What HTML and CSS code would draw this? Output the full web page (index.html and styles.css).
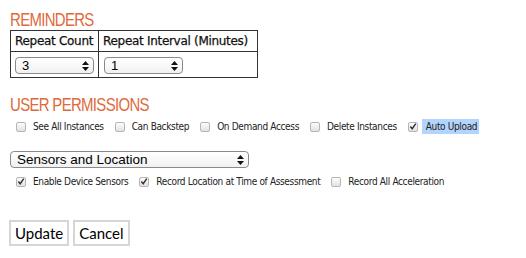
FILE: index.html
```html
<!DOCTYPE html>
<html>
<head>
<meta charset="utf-8">
<link rel="stylesheet" href="styles.css">
</head>
<body>
<h2 class="heading"><span class="heading-text">REMINDERS</span></h2>
<table class="reminders">
  <colgroup>
    <col class="col-count">
    <col class="col-interval">
  </colgroup>
  <tr>
    <th>Repeat Count</th>
    <th>Repeat Interval (Minutes)</th>
  </tr>
  <tr>
    <td class="cell-count">
      <span class="select-wrap select-small">
        <select class="select"><option>3</option></select>
        <svg class="arrows" width="7" height="10" viewBox="0 0 7 10"><path d="M3.5 0 L7 4 L0 4 Z M0 6 L7 6 L3.5 10 Z" fill="#111"/></svg>
      </span>
    </td>
    <td class="cell-interval">
      <span class="select-wrap select-small">
        <select class="select"><option>1</option></select>
        <svg class="arrows" width="7" height="10" viewBox="0 0 7 10"><path d="M3.5 0 L7 4 L0 4 Z M0 6 L7 6 L3.5 10 Z" fill="#111"/></svg>
      </span>
    </td>
  </tr>
</table>

<h2 class="heading heading-perm"><span class="heading-text">USER PERMISSIONS</span></h2>
<div class="perm-row perm-row-1">
  <label class="perm"><span class="cb"></span><span class="perm-text">See All Instances</span></label>
  <label class="perm"><span class="cb"></span><span class="perm-text">Can Backstep</span></label>
  <label class="perm"><span class="cb"></span><span class="perm-text">On Demand Access</span></label>
  <label class="perm"><span class="cb"></span><span class="perm-text">Delete Instances</span></label>
  <label class="perm"><span class="cb cb-checked"><svg width="9" height="9" viewBox="0 0 9 9"><path d="M1.5 4.5 L3.6 7 L7.6 1.2" fill="none" stroke="#333" stroke-width="1.6"/></svg></span><span class="perm-text highlight">Auto Upload</span></label>
</div>

<span class="select-wrap select-wide">
  <select class="select select-big"><option>Sensors and Location</option></select>
  <svg class="arrows" width="7" height="10" viewBox="0 0 7 10"><path d="M3.5 0 L7 4 L0 4 Z M0 6 L7 6 L3.5 10 Z" fill="#111"/></svg>
</span>

<div class="perm-row perm-row-2">
  <label class="perm"><span class="cb cb-checked"><svg width="9" height="9" viewBox="0 0 9 9"><path d="M1.5 4.5 L3.6 7 L7.6 1.2" fill="none" stroke="#333" stroke-width="1.6"/></svg></span><span class="perm-text">Enable Device Sensors</span></label>
  <label class="perm"><span class="cb cb-checked"><svg width="9" height="9" viewBox="0 0 9 9"><path d="M1.5 4.5 L3.6 7 L7.6 1.2" fill="none" stroke="#333" stroke-width="1.6"/></svg></span><span class="perm-text">Record Location at Time of Assessment</span></label>
  <label class="perm"><span class="cb"></span><span class="perm-text">Record All Acceleration</span></label>
</div>

<div class="buttons">
  <button class="btn">Update</button>
  <button class="btn">Cancel</button>
</div>
</body>
</html>
```

FILE: styles.css
```css
html, body {
  margin: 0;
  background: #fff;
}
body {
  padding: 10px 0 0 10px;
  font-family: "DejaVu Sans", Verdana, sans-serif;
  color: #222;
}
.heading {
  margin: 0;
  font-family: "Liberation Sans", Arial, sans-serif;
  font-weight: normal;
  font-size: 18px;
  line-height: 20px;
  color: #e0693b;
  white-space: nowrap;
}
.heading-text {
  display: inline-block;
  letter-spacing: -0.8px;
  transform: scaleX(0.83);
  transform-origin: 0 50%;
}
.heading-perm {
  margin-top: 17px;
}
.reminders {
  border-collapse: collapse;
  border: 1px solid #333;
  table-layout: fixed;
  width: 247px;
}
.col-count { width: 88px; }
.col-interval { width: 159px; }
.reminders th,
.reminders td {
  border: 1px solid #333;
  text-align: left;
  white-space: nowrap;
}
.reminders th {
  font-weight: normal;
  font-size: 12px;
  letter-spacing: -0.3px;
  height: 20px;
  padding: 0 0 0 4px;
  color: #111;
  -webkit-text-stroke: 0.25px #111;
}
.reminders td {
  height: 25px;
  padding: 0 4px;
  vertical-align: middle;
}
.reminders .cell-interval {
  padding-left: 5px;
}
.select-wrap {
  position: relative;
  display: inline-block;
  vertical-align: middle;
}
.select {
  -webkit-appearance: none;
  appearance: none;
  display: block;
  margin: 0;
  border: 1px solid #8a8a8a;
  border-radius: 4px;
  background: linear-gradient(#ffffff, #f1f1f1);
  font-family: "Liberation Sans", Arial, sans-serif;
  font-size: 13px;
  color: #000;
  padding: 0 0 0 6px;
  height: 17px;
  line-height: 15px;
}
.select-small .select {
  width: 79px;
}
.arrows {
  position: absolute;
  right: 5px;
  top: 4px;
  pointer-events: none;
}
.select-wide {
  display: block;
  width: 239px;
  margin-top: 17px;
}
.select-big {
  width: 239px;
  height: 17px;
  font-size: 13.5px;
  padding-left: 6px;
}
.perm-row {
  display: flex;
  align-items: center;
  gap: 11px;
  padding-left: 6px;
  height: 15px;
  font-family: "DejaVu Sans Condensed", "DejaVu Sans", sans-serif;
  font-size: 10px;
  letter-spacing: -0.35px;
  color: #222;
}
.perm-row-1 { margin-top: 4px; }
.perm-row-2 { margin-top: 6px; }
.perm {
  display: flex;
  align-items: center;
  gap: 7px;
}
.cb {
  box-sizing: border-box;
  width: 10px;
  height: 10px;
  border: 1px solid #b5b5b5;
  border-radius: 2px;
  background: linear-gradient(#fdfdfd, #e2e2e2);
  display: flex;
  align-items: center;
  justify-content: center;
}
.cb svg { display: block; }
.perm-text {
  line-height: 15px;
}
.highlight {
  background: #b3d5fd;
  padding: 0 2px 0 4px;
  margin-left: -3px;
}
.buttons {
  display: flex;
  gap: 4px;
  margin-top: 31px;
  margin-left: -1px;
}
.btn {
  margin: 0;
  height: 26px;
  padding: 0 4px;
  border: 2px solid #d6d6d6;
  background: #fff;
  font-family: "Lato", sans-serif;
  font-size: 15px;
  color: #000;
}
```
